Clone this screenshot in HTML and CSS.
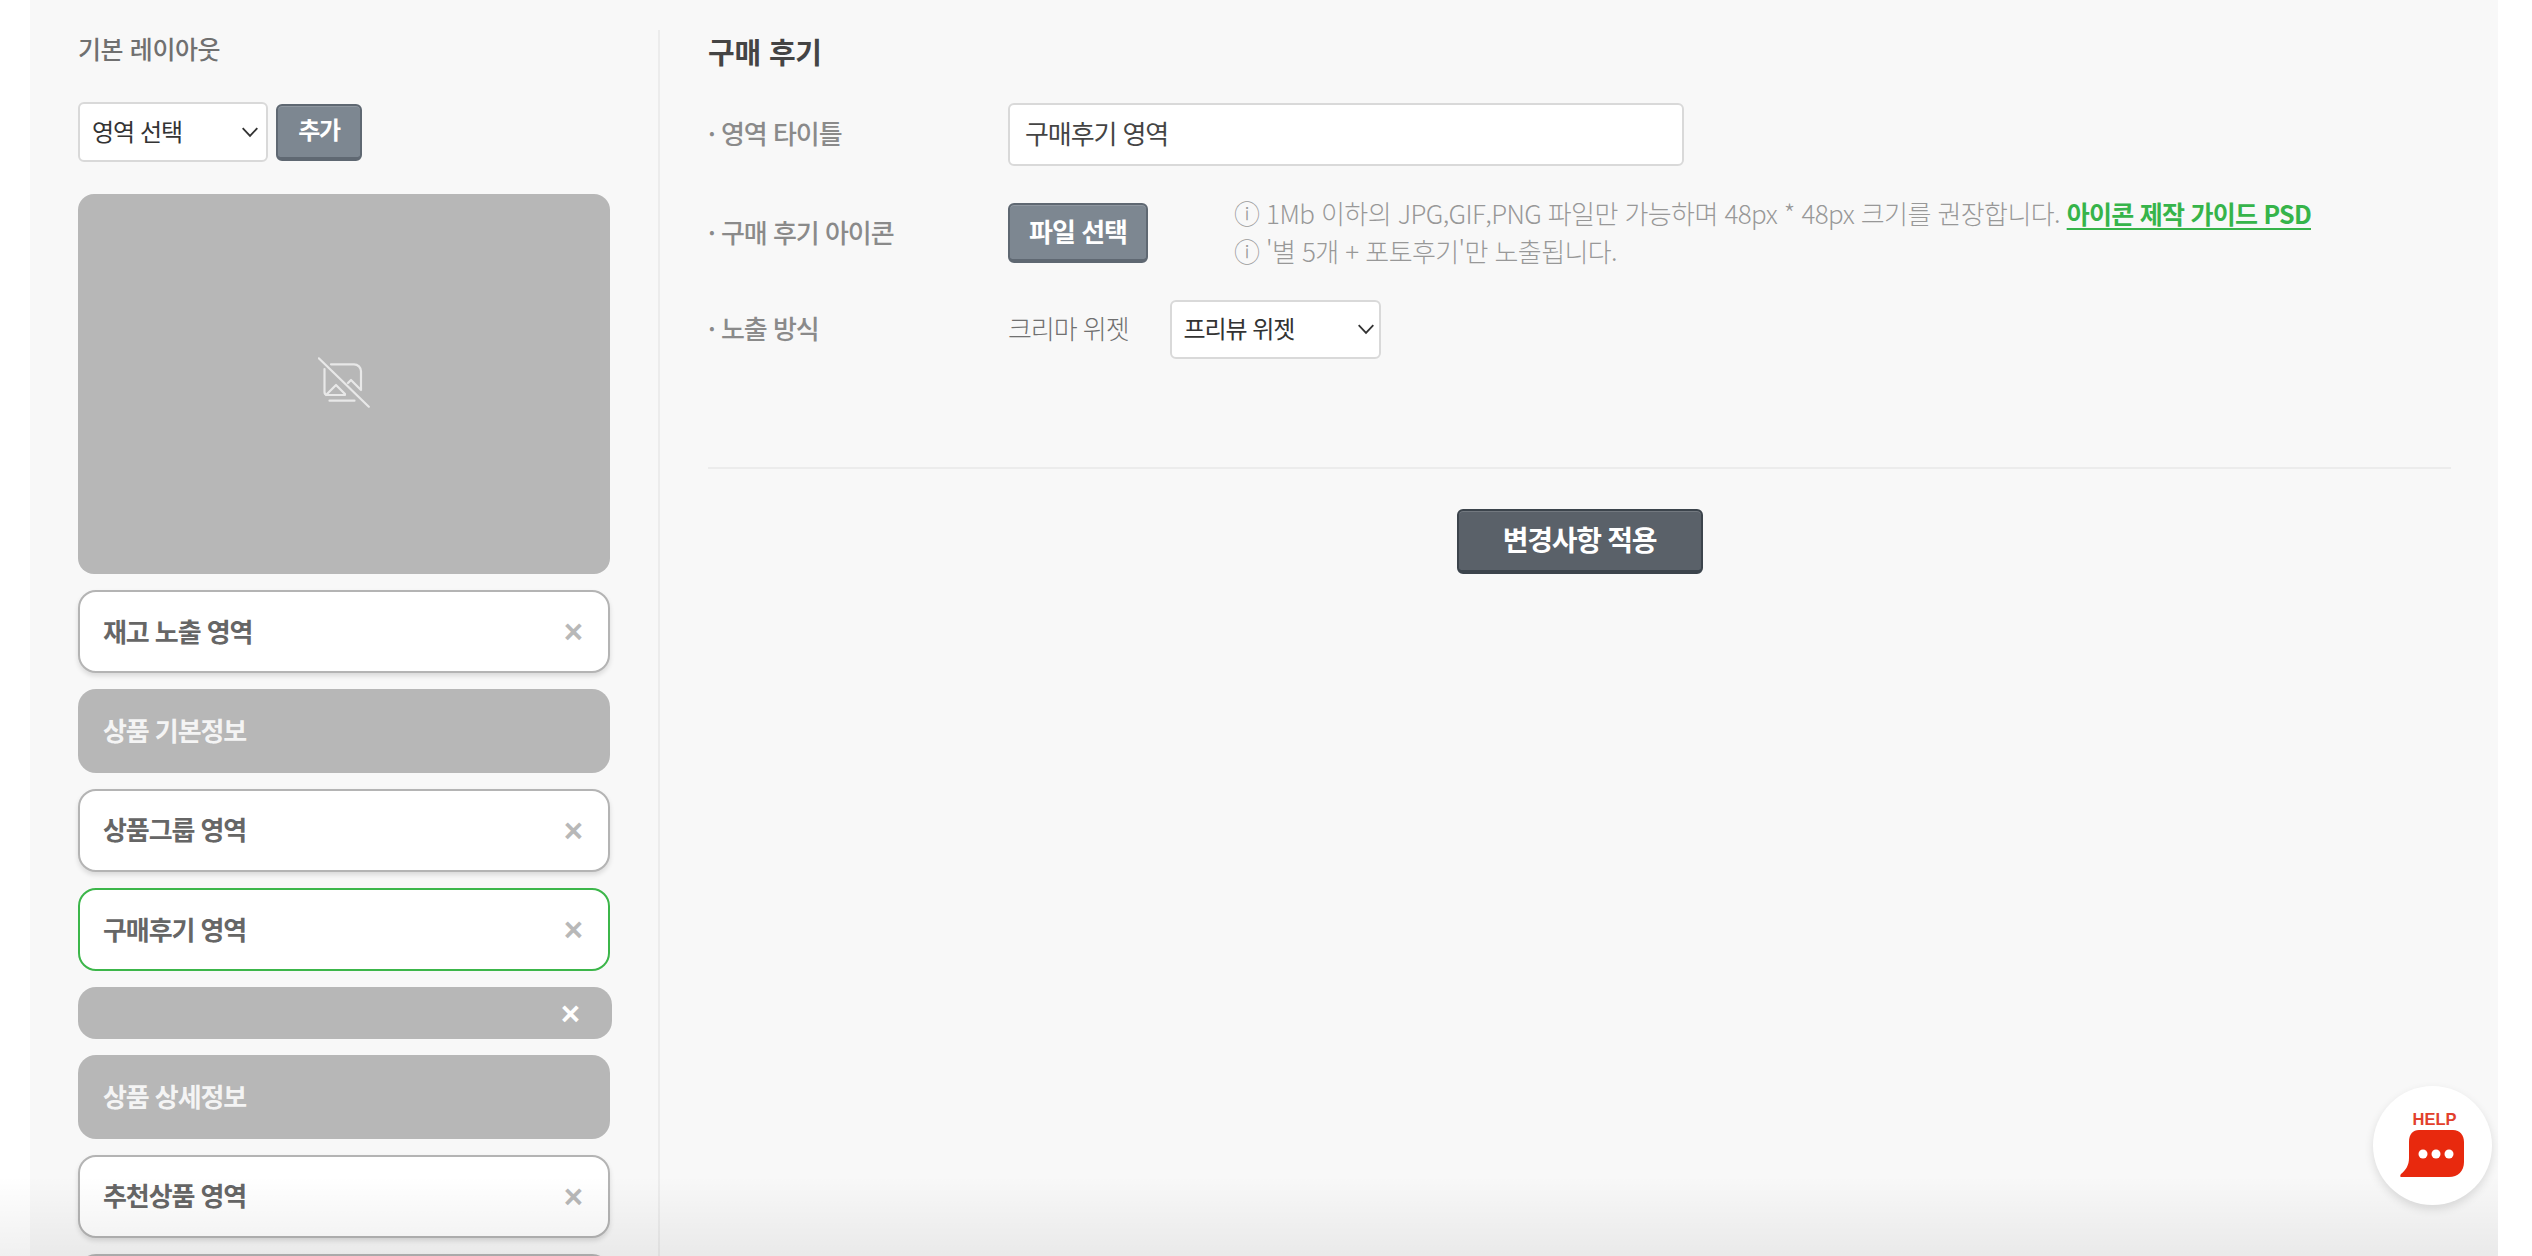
FILE: index.html
```html
<!DOCTYPE html>
<html lang="ko">
<head>
<meta charset="utf-8">
<title>구매 후기</title>
<link rel="stylesheet" href="styles.css">
</head>
<body>
<div class="page">
  <div class="panel">
    <aside class="sidebar">
      <h2 class="side-title">기본 레이아웃</h2>
      <div class="add-row">
        <div class="select select-area"><span>영역 선택</span><svg class="chev" viewBox="0 0 16 10"><path d="M1.500 1.500 8 8.500l6.500-7"/></svg></div>
        <button class="btn btn-add">추가</button>
      </div>
      <div class="preview">
        <svg class="noimg" viewBox="0 0 52 52"><path d="M6.500 13V36q0 3 3 3H27M13 8.300H36a7 7 0 0 1 7 7V34M8 39l10-10 9 9M30 27l3-3 10 10M11.500 44.700H36.500M.8 2.300 50.800 50.700"/></svg>
      </div>
      <ul class="items">
        <li class="item"><span>재고 노출 영역</span><i class="x">×</i></li>
        <li class="item fixed"><span>상품 기본정보</span></li>
        <li class="item"><span>상품그룹 영역</span><i class="x">×</i></li>
        <li class="item active"><span>구매후기 영역</span><i class="x">×</i></li>
        <li class="item slim"><i class="x">×</i></li>
        <li class="item fixed"><span>상품 상세정보</span></li>
        <li class="item"><span>추천상품 영역</span><i class="x">×</i></li>
        <li class="item"></li>
      </ul>
    </aside>
    <main class="main">
      <h1 class="main-title">구매 후기</h1>
      <div class="row row-title">
        <div class="label">· 영역 타이틀</div>
        <div class="input">구매후기 영역</div>
      </div>
      <div class="row row-icon">
        <div class="label">· 구매 후기 아이콘</div>
        <button class="btn btn-file">파일 선택</button>
        <div class="notes">
          <p>ⓘ 1Mb 이하의 JPG,GIF,PNG 파일만 가능하며 48px * 48px 크기를 권장합니다. <a class="guide">아이콘 제작 가이드 PSD</a></p>
          <p>ⓘ '별 5개 + 포토후기'만 노출됩니다.</p>
        </div>
      </div>
      <div class="row row-mode">
        <div class="label">· 노출 방식</div>
        <span class="mode-text">크리마 위젯</span>
        <div class="select select-mode"><span>프리뷰 위젯</span><svg class="chev" viewBox="0 0 16 10"><path d="M1.500 1.500 8 8.500l6.500-7"/></svg></div>
      </div>
      <div class="actions"><button class="btn btn-apply">변경사항 적용</button></div>
    </main>
  </div>
  <div class="fade"></div>
  <div class="help">
    <span class="help-text">HELP</span>
    <svg class="help-bubble" viewBox="0 0 64 47"><path d="M19 0H53C60 0 64 5 64 12V32C64 41 58 47 49 47H1C0 47 0 45 1 44 6 40 9 35 9 28V12C9 4 13 0 19 0Z"/><circle cx="23" cy="24" r="4.500"/><circle cx="36" cy="24" r="4.500"/><circle cx="49" cy="24" r="4.500"/></svg>
  </div>
</div>
</body>
</html>
```
FILE: styles.css
```css
* { box-sizing: border-box; }
html, body { margin: 0; padding: 0; background: #fff; }
body { font-family: "Noto Sans CJK KR", "Noto Sans", sans-serif; color: #444; }
h1, h2, p, ul { margin: 0; padding: 0; }
ul { list-style: none; }
.page { position: relative; width: 2532px; height: 1256px; overflow: hidden; padding: 0 34px 0 30px; }
.panel { display: flex; height: 100%; background: #f8f8f8; padding-top: 30px; align-items: stretch; }

.sidebar { width: 630px; padding: 0 48px 0 48px; border-right: 2px solid #ececec; flex: none; height: 1300px; }
.side-title { font-size: 25px; font-weight: 500; line-height: 36px; color: #707070; letter-spacing: -.4px; margin-bottom: 36px; height: 36px; }
.add-row { display: flex; gap: 8px; align-items: center; margin-bottom: 32px; }

.select { display: flex; align-items: center; justify-content: space-between; background: #fff; border: 2px solid #d9d9d9; border-radius: 6px; color: #333; font-size: 24px; letter-spacing: -1px; padding-bottom: 4px; }
.select-area { width: 190px; height: 60px; padding-left: 12px; padding-right: 7px; }
.select-mode { width: 211px; height: 59px; padding-left: 12px; padding-right: 4px; margin-left: 41px; letter-spacing: -1.100px; font-weight: 400; }
.chev { width: 18px; height: 12px; fill: none; stroke: #333; stroke-width: 1.600; margin-top: 3px; }

.btn { display: block; border: 2px solid #5f6872; border-bottom-width: 4px; border-radius: 6px; background: #7d8791; color: #fff; font-family: inherit; font-weight: 700; padding: 0; letter-spacing: -1px; box-shadow: inset 0 1px 0 rgba(255,255,255,.15); }
.btn-add { width: 86px; height: 57px; font-size: 24px; letter-spacing: -1.300px; padding-bottom: 5px; }
.btn-file { width: 140px; height: 60px; font-size: 26px; flex: none; padding-bottom: 3px; }
.btn-apply { width: 246px; height: 65px; font-size: 28px; letter-spacing: -1.250px; padding-bottom: 4px; background: #5a6169; border-color: #3c444c; border-width: 2px 2px 4px; }

.preview { display: flex; align-items: center; justify-content: center; height: 380px; background: #b7b7b7; border-radius: 16px; margin-bottom: 16px; padding-bottom: 4px; }
.noimg { width: 52px; height: 52px; fill: none; stroke: #e8e8e8; stroke-width: 2.200; stroke-linecap: round; stroke-linejoin: round; }

.items { display: flex; flex-direction: column; gap: 16px; }
.item { display: flex; align-items: center; justify-content: space-between; height: 83.330px; padding: 0 24px 3px 23px; background: #fff; border: 2px solid #b4b4b4; border-radius: 18px; box-shadow: 0 3px 5px rgba(0,0,0,.12); font-size: 26px; font-weight: 700; color: #666; letter-spacing: -1.100px; }
.item .x { font-style: normal; font-weight: 700; font-size: 33px; line-height: 1; color: #b8b8b8; font-family: "Liberation Sans", sans-serif; letter-spacing: 0; margin: 3px 1px 0 0; }
.fixed { background: #b7b7b7; border: 0; box-shadow: none; color: #f4f4f4; padding-left: 25px; }
.active { border-color: #3cb64a; box-shadow: none; }
.slim { height: 52px; width: 534px; justify-content: flex-end; background: #b7b7b7; border: 0; box-shadow: none; padding: 0 31px 3px; }
.slim .x { color: #fff; }

.main { flex: 1; padding: 0 47px 0 48px; min-width: 0; }
.main-title { font-size: 29px; font-weight: 700; line-height: 44px; color: #444; letter-spacing: -.2px; margin-bottom: 29px; position: relative; top: -1px; }
.row { display: flex; align-items: center; }
.label { width: 300px; flex: none; font-size: 26px; font-weight: 500; color: #8a8a8a; letter-spacing: -1.050px; padding-bottom: 4px; }
.row-title { height: 63px; margin-bottom: 37px; }
.input { display: flex; align-items: center; width: 676px; height: 63px; padding: 0 15px 4px; background: #fff; border: 2px solid #d9d9d9; border-radius: 6px; font-size: 26px; color: #444; letter-spacing: -1.100px; }
.row-icon { height: 60px; margin-bottom: 37px; }
.notes { margin-left: 86px; font-size: 26px; line-height: 38px; color: #989898; letter-spacing: -.6px; font-weight: 300; white-space: nowrap; padding-bottom: 3px; }
.guide { color: #36b44a; font-size: 25px; font-weight: 700; text-decoration: underline; text-underline-offset: 4px; letter-spacing: -.75px; }
.row-mode { height: 59px; }
.mode-text { font-size: 26px; color: #707070; letter-spacing: -1.050px; font-weight: 300; padding-bottom: 5px; }
.actions { margin-top: 108px; padding-top: 40px; border-top: 2px solid #ececec; display: flex; justify-content: center; }

.fade { position: absolute; left: 0; right: 34px; bottom: 0; height: 80px; background: linear-gradient(rgba(0,0,0,0), rgba(0,0,0,.06)); }
.help { position: absolute; left: 2373px; top: 1086px; width: 119px; height: 119px; border-radius: 50%; background: #fff; box-shadow: 0 4px 10px rgba(0,0,0,.12); display: flex; flex-direction: column; align-items: center; padding-top: 25px; }
.help-text { font-family: "Liberation Sans", sans-serif; font-size: 16.500px; line-height: 16px; font-weight: 700; color: #e2402c; margin-bottom: 3px; margin-left: 4px; }
.help-bubble { width: 64px; height: 47px; fill: #e8290e; flex: none; margin-left: -2px; }
.help-bubble circle { fill: #fff; }
```
